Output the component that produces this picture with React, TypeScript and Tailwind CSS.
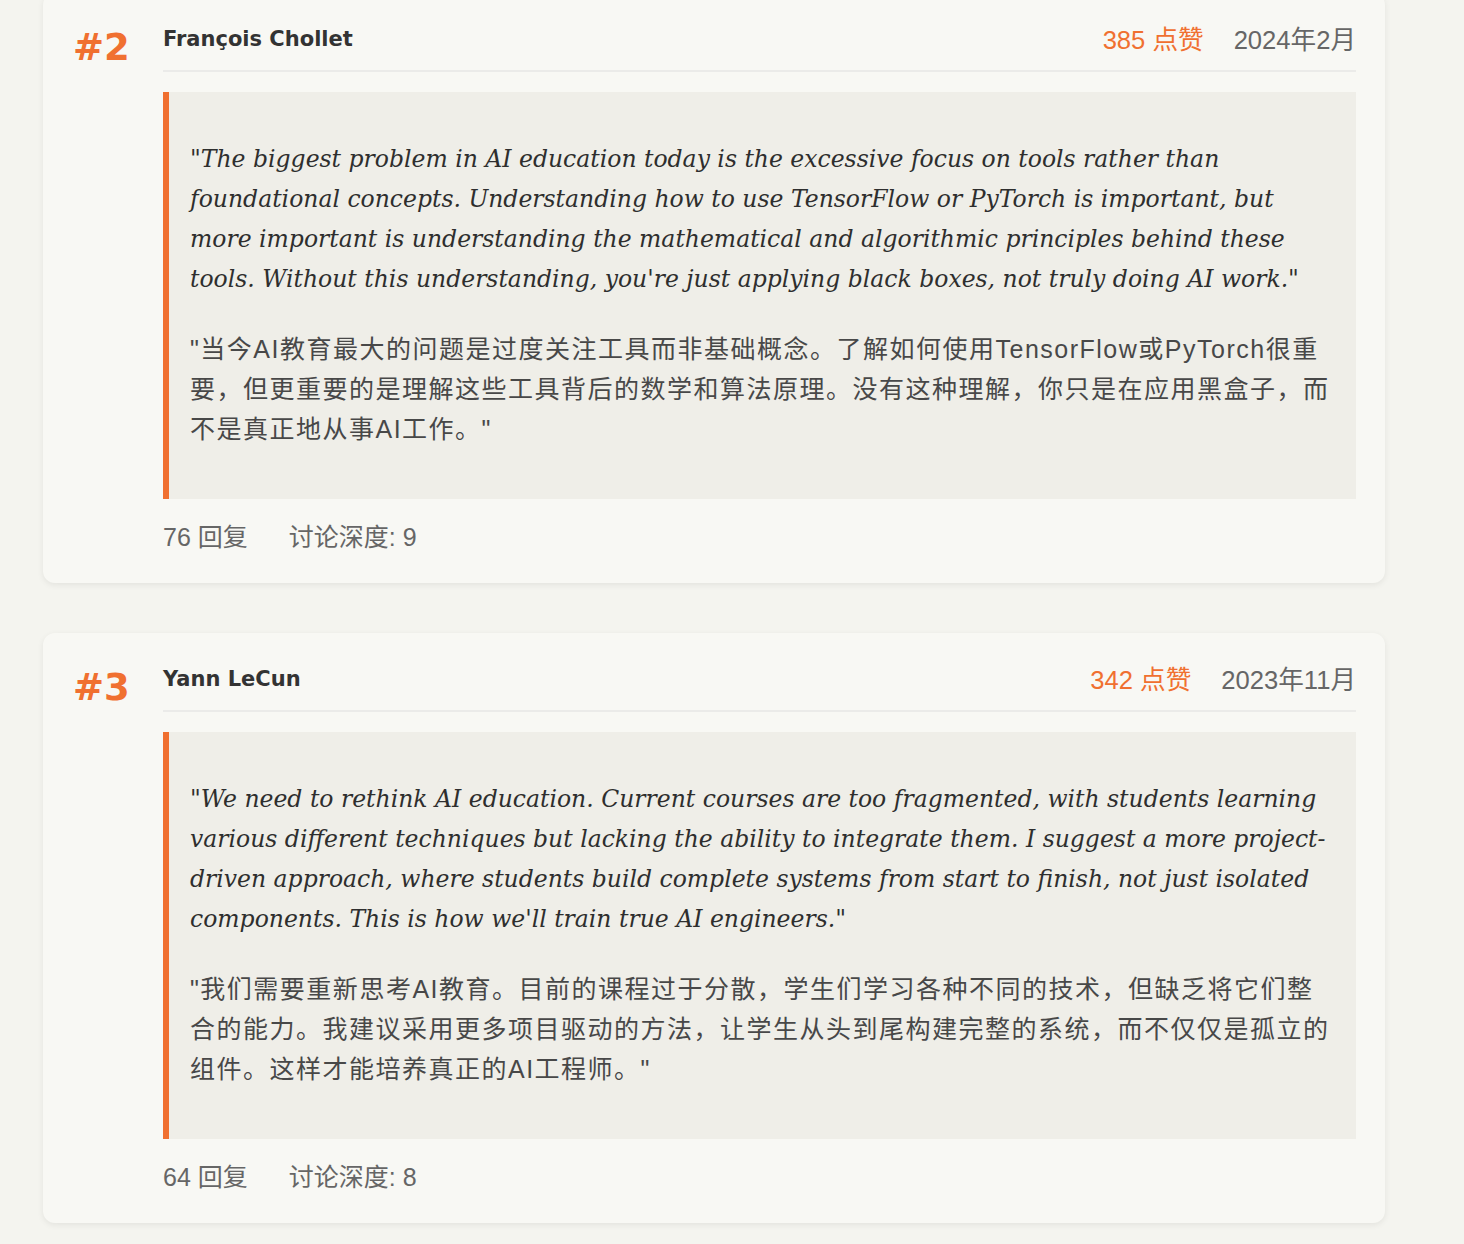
import React from 'react';

type Comment = {
    rank: number;
    author: string;
    likes: number;
    date: string;
    en: string;
    zh: string;
    replies: number;
    depth: number;
};

const comments: Comment[] = [
    {
        rank: 2,
        author: 'François Chollet',
        likes: 385,
        date: '2024年2月',
        en: '"The biggest problem in AI education today is the excessive focus on tools rather than foundational concepts. Understanding how to use TensorFlow or PyTorch is important, but more important is understanding the mathematical and algorithmic principles behind these tools. Without this understanding, you\'re just applying black boxes, not truly doing AI work."',
        zh: '"当今AI教育最大的问题是过度关注工具而非基础概念。了解如何使用TensorFlow或PyTorch很重要，但更重要的是理解这些工具背后的数学和算法原理。没有这种理解，你只是在应用黑盒子，而不是真正地从事AI工作。"',
        replies: 76,
        depth: 9,
    },
    {
        rank: 3,
        author: 'Yann LeCun',
        likes: 342,
        date: '2023年11月',
        en: '"We need to rethink AI education. Current courses are too fragmented, with students learning various different techniques but lacking the ability to integrate them. I suggest a more project-driven approach, where students build complete systems from start to finish, not just isolated components. This is how we\'ll train true AI engineers."',
        zh: '"我们需要重新思考AI教育。目前的课程过于分散，学生们学习各种不同的技术，但缺乏将它们整合的能力。我建议采用更多项目驱动的方法，让学生从头到尾构建完整的系统，而不仅仅是孤立的组件。这样才能培养真正的AI工程师。"',
        replies: 64,
        depth: 8,
    },
];

const sans = "font-['Liberation_Sans','Noto_Sans_CJK_SC',sans-serif]";

const CommentCard: React.FC<{ c: Comment }> = ({ c }) => {
    return (
        <div className="flex rounded-xl bg-[#f8f8f4] pt-[30px] pb-[28px] pl-[30px] pr-[29px] shadow-[0_2px_6px_rgba(0,0,0,0.07)]">
            <div className="w-[90px] shrink-0 font-['DejaVu_Sans',sans-serif] text-[37px] font-bold leading-[50px] text-[#f07030]">
                #{c.rank}
            </div>
            <div className="min-w-0 flex-1">
                <div className="flex h-[49px] items-start justify-between border-b-2 border-[#ebebe9] pb-[15px]">
                    <div className="flex h-[34px] items-center font-['DejaVu_Sans',sans-serif] text-[21px] font-bold text-[#333]">
                        {c.author}
                    </div>
                    <div className={`flex h-[34px] items-center gap-[30px] text-[25.6px] ${sans}`}>
                        <span className="text-[#f07030]">{c.likes} 点赞</span>
                        <span className="text-[#666]">{c.date}</span>
                    </div>
                </div>
                <div className="mt-[20px] border-l-[6px] border-[#f07030] bg-[#efeee8] pt-[47px] pb-[50px] pl-[21px] pr-[20px]">
                    <p className="mb-[30px] font-['DejaVu_Serif',serif] text-[23.5px] italic leading-[40px] text-[#2e2e2e]">
                        {c.en}
                    </p>
                    <p className={`text-[25px] leading-[40px] tracking-[1.5px] text-[#484848] ${sans}`}>
                        {c.zh}
                    </p>
                </div>
                <div className={`mt-[20px] flex gap-[41px] text-[25px] leading-[36px] text-[#666] ${sans}`}>
                    <span>{c.replies} 回复</span>
                    <span>讨论深度: {c.depth}</span>
                </div>
            </div>
        </div>
    );
};

export default function App() {
    return (
        <div className="min-h-screen w-full overflow-hidden bg-[#f4f4ef]">
            <div className="ml-[43px] mt-[-7px] flex w-[1342px] flex-col gap-[50px] pb-[40px]">
                {comments.map((c) => (
                    <CommentCard key={c.rank} c={c} />
                ))}
            </div>
        </div>
    );
}
